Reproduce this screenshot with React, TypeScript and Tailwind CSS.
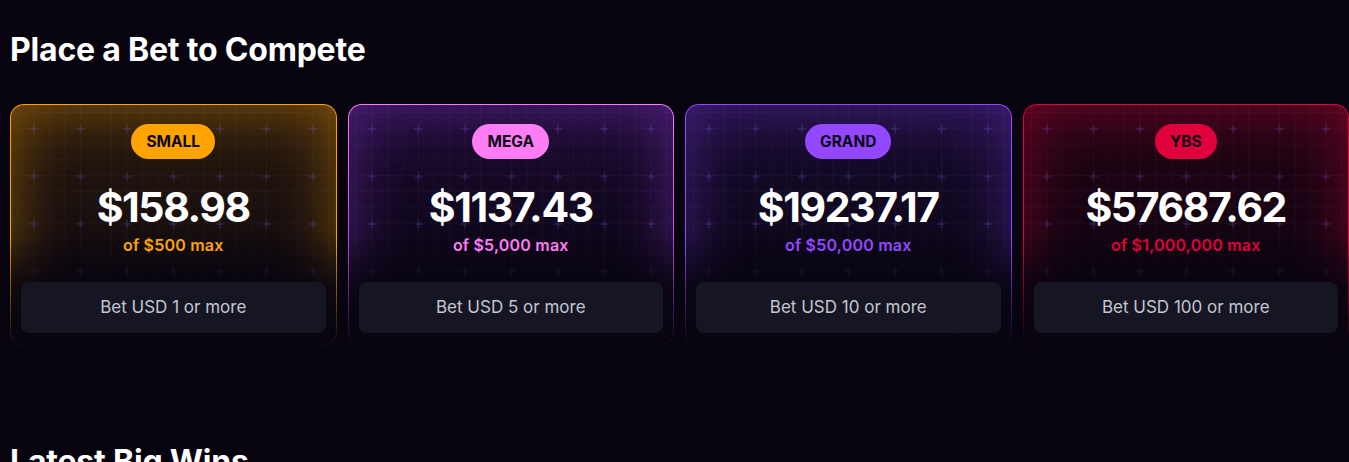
import React from 'react';

const tiers = [
  {
    name: 'SMALL',
    amount: '$158.98',
    max: 'of $500 max',
    bet: 'Bet USD 1 or more',
    border: 'bg-[linear-gradient(to_bottom,#ffa300_0%,#ffa300_55%,rgba(255,163,0,0)_100%)]',
    glow: 'shadow-[inset_0_0_60px_rgba(255,163,0,0.42)]',
    tint: 'bg-[linear-gradient(to_bottom,rgba(255,163,0,0.14),rgba(255,163,0,0.05)_60%,transparent)]',
    badge: 'bg-[#ffa300]',
    text: 'text-[#ffa300]',
  },
  {
    name: 'MEGA',
    amount: '$1137.43',
    max: 'of $5,000 max',
    bet: 'Bet USD 5 or more',
    border: 'bg-[linear-gradient(to_bottom,#ff7cf5_0%,#b84fe0_55%,rgba(140,60,220,0)_100%)]',
    glow: 'shadow-[inset_0_0_60px_rgba(150,60,230,0.45)]',
    tint: 'bg-[linear-gradient(to_bottom,rgba(140,50,230,0.16),rgba(140,50,230,0.05)_60%,transparent)]',
    badge: 'bg-[#ff7cf5]',
    text: 'text-[#ff7cf5]',
  },
  {
    name: 'GRAND',
    amount: '$19237.17',
    max: 'of $50,000 max',
    bet: 'Bet USD 10 or more',
    border: 'bg-[linear-gradient(to_bottom,#9347ff_0%,#9347ff_55%,rgba(147,71,255,0)_100%)]',
    glow: 'shadow-[inset_0_0_60px_rgba(120,55,230,0.45)]',
    tint: 'bg-[linear-gradient(to_bottom,rgba(120,55,230,0.16),rgba(120,55,230,0.05)_60%,transparent)]',
    badge: 'bg-[#9347ff]',
    text: 'text-[#9347ff]',
  },
  {
    name: 'YBS',
    amount: '$57687.62',
    max: 'of $1,000,000 max',
    bet: 'Bet USD 100 or more',
    border: 'bg-[linear-gradient(to_bottom,#e0003c_0%,#e0003c_55%,rgba(224,0,60,0)_100%)]',
    glow: 'shadow-[inset_0_0_60px_rgba(224,0,60,0.42)]',
    tint: 'bg-[linear-gradient(to_bottom,rgba(224,0,60,0.14),rgba(224,0,60,0.05)_60%,transparent)]',
    badge: 'bg-[#e0003c]',
    text: 'text-[#e0003c]',
  },
];

function GridBg() {
  return (
    <svg className="absolute inset-0 h-full w-full" aria-hidden>
      <defs>
        <pattern id="cells" width="15.5" height="15.75" patternUnits="userSpaceOnUse" x="8" y="8">
          <path d="M15.5 0V15.75M0 15.75H15.5" stroke="rgba(255,255,255,0.05)" strokeWidth="1" fill="none" />
        </pattern>
        <pattern id="plus" width="46.5" height="47.5" patternUnits="userSpaceOnUse" x="19" y="20">
          <path d="M4 0V8M0 4H8" stroke="rgba(120,80,210,0.4)" strokeWidth="1" fill="none" />
        </pattern>
      </defs>
      <rect width="100%" height="100%" fill="url(#cells)" />
      <rect width="100%" height="100%" fill="url(#plus)" />
    </svg>
  );
}

function TierCard({ t }: { t: (typeof tiers)[number] }) {
  return (
    <div className={`rounded-[14px] p-px ${t.border}`}>
      <div className={`relative h-[240px] overflow-hidden rounded-[13px] bg-[#07040f] ${t.glow}`}>
        <div className={`absolute inset-0 ${t.tint}`} />
        <GridBg />
        <div className="absolute inset-x-0 bottom-0 h-[48%] bg-gradient-to-b from-transparent via-[#07040f]/85 to-[#07040f]" />
        <div className="relative flex h-full flex-col items-center px-[10px] pt-[19px]">
          <span className={`flex h-[35px] items-center rounded-full px-[15px] text-[15.5px] font-bold text-[#0b0614] ${t.badge}`}>
            {t.name}
          </span>
          <div className="mt-[24px] text-[41px] font-bold leading-[48px] tracking-[-1.4px] text-white">
            {t.amount}
          </div>
          <div className={`mt-[4px] text-[16px] font-semibold leading-5 tracking-[0.2px] ${t.text}`}>{t.max}</div>
          <button className="mt-[27px] h-[51px] w-full rounded-[8px] bg-[#151622] text-[17px] text-[#c4c5d2]">
            {t.bet}
          </button>
        </div>
      </div>
    </div>
  );
}

export default function App() {
  return (
    <div className="min-h-screen overflow-hidden bg-[#07040f] pl-[10px] font-['Inter',sans-serif]">
      <h2 className="pt-[31px] text-[32px] font-bold leading-[38px] tracking-[-0.2px] text-white">
        Place a Bet to Compete
      </h2>
      <div className="mt-[35px] grid grid-cols-4 gap-[11px]">
        {tiers.map((t) => (
          <TierCard key={t.name} t={t} />
        ))}
      </div>
      <h2 className="mt-[97px] text-[32px] font-bold leading-[38px] tracking-[-0.2px] text-white">
        Latest Big Wins
      </h2>
    </div>
  );
}
